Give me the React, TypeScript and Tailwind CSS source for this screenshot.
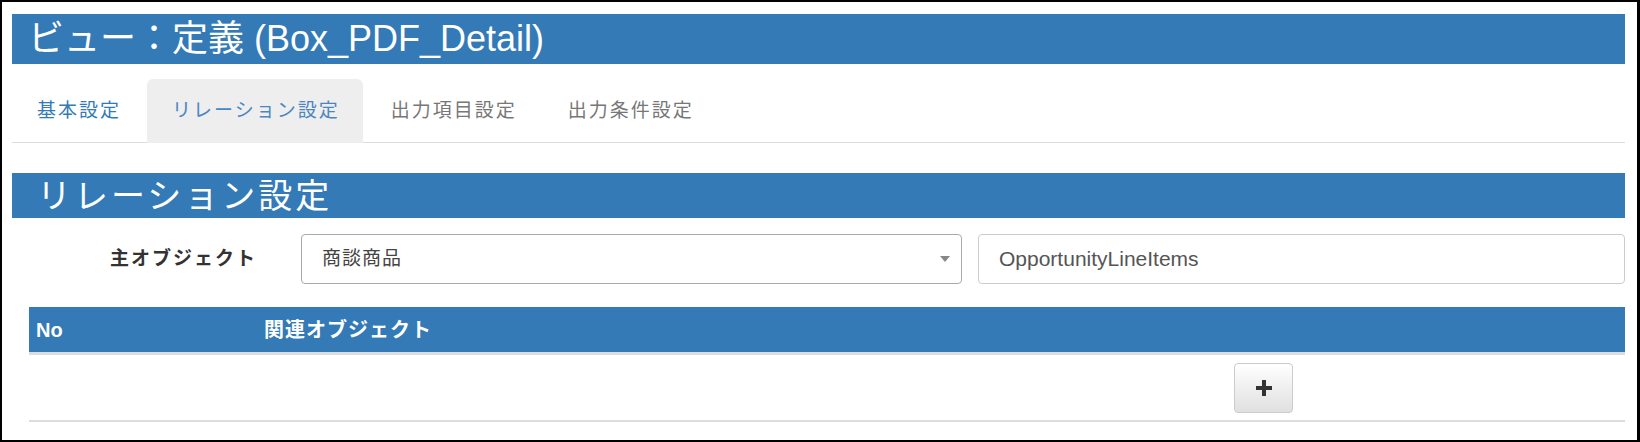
export default function App() {
  const font = { fontFamily: '"Liberation Sans", "Noto Sans CJK JP", sans-serif' };
  const tabs = [
    { label: "基本設定", active: false, color: "text-[#337ab7]" },
    { label: "リレーション設定", active: true, color: "text-[#4a86c2]" },
    { label: "出力項目設定", active: false, color: "text-[#777]" },
    { label: "出力条件設定", active: false, color: "text-[#777]" },
  ];

  return (
    <div
      className="w-[1640px] h-[442px] bg-white border-t-2 border-l-2 border-b-2 border-r-[3px] border-black pl-[10px] pr-[12px] overflow-hidden"
      style={font}
    >
      {/* title bar */}
      <div className="mt-[12px] h-[50px] bg-[#337ab7] flex items-center pl-[16px]">
        <h1 className="text-white text-[36px] leading-none">ビュー：定義 (Box_PDF_Detail)</h1>
      </div>

      {/* tabs */}
      <ul className="mt-[15px] flex border-b border-[#ddd] h-[64px]">
        {tabs.map((t) => (
          <li
            key={t.label}
            className={`mr-[3px] -mb-px pl-[25px] pr-[23px] flex items-center text-[19px] tracking-[2px] rounded-t-[6px] ${t.color} ${
              t.active ? "bg-[#eee]" : ""
            }`}
          >
            {t.label}
          </li>
        ))}
      </ul>

      {/* section header */}
      <div className="mt-[30px] h-[45px] bg-[#337ab7] flex items-center pl-[25px]">
        <h2 className="text-white text-[34px] tracking-[3px] leading-none">リレーション設定</h2>
      </div>

      {/* main object row */}
      <div className="mt-[16px] flex items-center h-[50px]">
        <label className="w-[245px] text-right font-bold text-[19px] tracking-[2px] text-[#333]">主オブジェクト</label>
        <div className="ml-[44px] w-[661px] h-[50px] border border-[#aaa] rounded-[4px] flex items-center justify-between pl-[20px] pr-[10px] text-[#444] text-[19px] tracking-[1px]">
          <span>商談商品</span>
          <svg width="10" height="6" viewBox="0 0 10 6" className="mr-[1px]">
            <path d="M0 0 L10 0 L5 6 Z" fill="#888" />
          </svg>
        </div>
        <div className="ml-[16px] flex-1 h-[50px] border border-[#ccc] rounded-[4px] flex items-center pl-[20px] text-[#555] text-[21px]">
          OpportunityLineItems
        </div>
      </div>

      {/* relation table */}
      <div className="mt-[23px] ml-[17px]">
        <div className="h-[45px] bg-[#337ab7] flex items-center text-white font-bold text-[20px] border-b-[3px] border-[#ddd] box-content">
          <div className="w-[228px] pl-[7px]">No</div>
          <div className="pl-[7px] tracking-[1px]">関連オブジェクト</div>
        </div>
        <div className="h-[67px] flex items-center border-b-2 border-[#ddd]">
          <div className="w-[1205px]" />
          <button className="w-[59px] h-[50px] rounded-[4px] border border-[#ccc] bg-gradient-to-b from-white to-[#e0e0e0] flex items-center justify-center">
            <svg width="18" height="18" viewBox="0 0 18 18">
              <path d="M7 1 H11 V7 H17 V11 H11 V17 H7 V11 H1 V7 H7 Z" fill="#333" />
            </svg>
          </button>
        </div>
      </div>
    </div>
  );
}
